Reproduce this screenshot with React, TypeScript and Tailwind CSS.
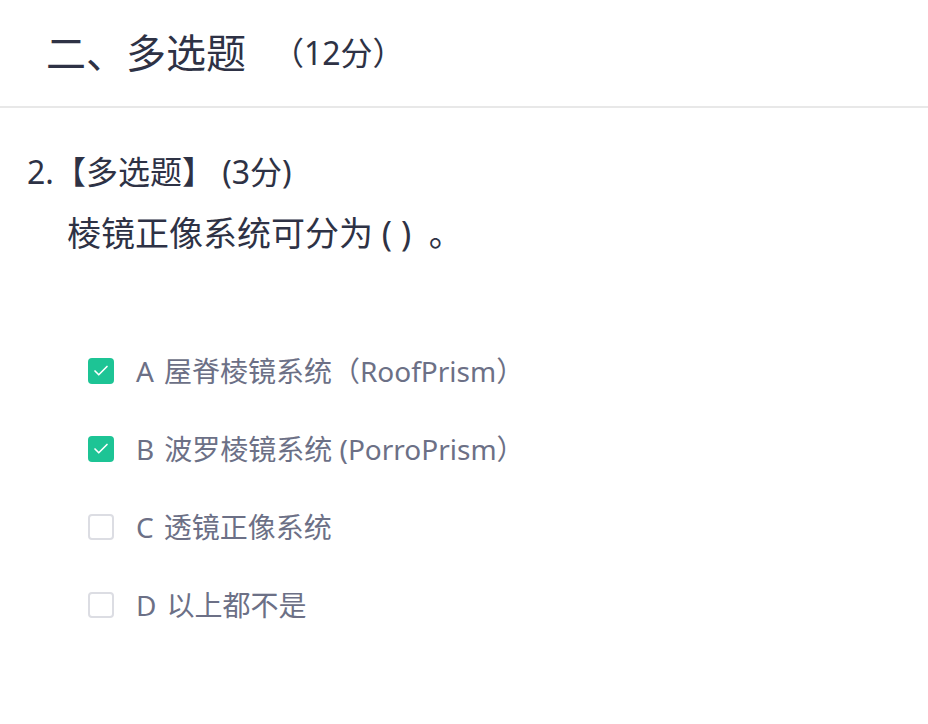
import { Check } from 'lucide-react';

const options = [
  { key: 'A', text: '屋脊棱镜系统（RoofPrism）', checked: true },
  { key: 'B', text: '波罗棱镜系统 (PorroPrism）', checked: true },
  { key: 'C', text: '透镜正像系统', checked: false },
  { key: 'D', text: '以上都不是', checked: false },
];

export default function App() {
  return (
    <div className="min-h-screen bg-white font-['Noto_Sans','Noto_Sans_CJK_SC',sans-serif]">
      {/* Section header */}
      <div className="h-[108px] flex items-center pl-[46px] border-b-2 border-[#e8e8e8]">
        <span className="text-[40px] leading-none text-[#2e3245]">二、多选题</span>
        <span className="ml-[26px] text-[32px] leading-none text-[#2e3245]">（12分）</span>
      </div>

      {/* Question */}
      <div className="pl-[27px] pt-[42px]">
        <div className="text-[32px] leading-[44px] text-[#2e3245]">2.【多选题】 (3分)</div>
        <div className="mt-[17px] pl-[40px] text-[34px] leading-[44px] text-[#2e3245] whitespace-pre">棱镜正像系统可分为 ( )  。</div>

        <div className="mt-[77px] pl-[61px] flex flex-col">
          {options.map(o => (
            <div key={o.key} className="h-[78px] flex items-center gap-[22px]">
              {o.checked ? (
                <div className="w-[26px] h-[26px] rounded-[4px] bg-[#1dc495] flex items-center justify-center">
                  <Check size={18} strokeWidth={2.2} className="text-white" />
                </div>
              ) : (
                <div className="w-[26px] h-[26px] rounded-[4px] border-2 border-[#dcdde3] bg-white" />
              )}
              <span className="text-[28px] leading-none text-[#6c7086] flex items-center gap-[10px]">
                <span>{o.key}</span>
                <span>{o.text}</span>
              </span>
            </div>
          ))}
        </div>
      </div>
    </div>
  );
}
